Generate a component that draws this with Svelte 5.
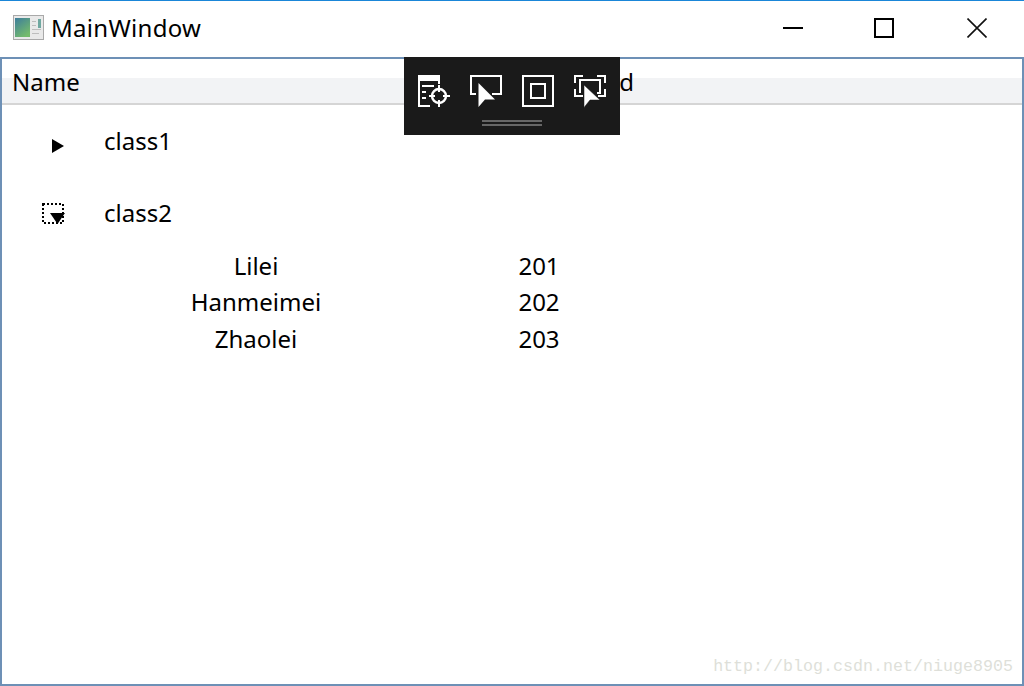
<script>
  const groups = [
    { name: 'class1', open: false, students: [] },
    {
      name: 'class2',
      open: true,
      students: [
        { name: 'Lilei', id: 201 },
        { name: 'Hanmeimei', id: 202 },
        { name: 'Zhaolei', id: 203 }
      ]
    }
  ];
</script>

<div class="window">
  <div class="titlebar">
    <svg class="app-icon" viewBox="0 0 31 25" width="31" height="25">
      <defs>
        <linearGradient id="pane" x1="0" y1="0" x2="0.6" y2="1">
          <stop offset="0" stop-color="#3d7d9c" />
          <stop offset="1" stop-color="#74bb6c" />
        </linearGradient>
      </defs>
      <rect x="0.5" y="0.5" width="30" height="24" fill="#e9e9e9" stroke="#a9a9a9" />
      <rect x="2" y="3" width="15" height="19" fill="url(#pane)" />
      <rect x="25" y="4" width="3" height="9" fill="#6fa8a0" />
      <path d="M19 6.500h4M19 10.500h4M19 14.500h9M19 18.500h7" stroke="#bdbdbd" fill="none" />
    </svg>
    <span class="title">MainWindow</span>
    <div class="controls">
      <svg class="ctl-min" viewBox="0 0 20 20" width="20" height="20"><path d="M0 10h20" stroke="#000" stroke-width="2" /></svg>
      <svg class="ctl-max" viewBox="0 0 20 20" width="20" height="20"><rect x="1" y="1" width="18" height="18" fill="none" stroke="#000" stroke-width="2" /></svg>
      <svg class="ctl-close" viewBox="0 0 20 20" width="20" height="20"><path d="M0.500 0.500l19 19M19.500 0.500l-19 19" stroke="#111" stroke-width="1.6" /></svg>
    </div>
  </div>

  <div class="client">
    <div class="header">
      <span class="col-name">Name</span>
      <span class="col-id">Id</span>
    </div>

    <div class="list">
      {#each groups as group}
        <div class="group" class:open={group.open}>
          <div class="expander">
            <svg class="toggle" viewBox="0 0 24 24" width="24" height="24">
              {#if group.open}
                <rect x="1" y="3" width="20" height="19" fill="none" stroke="#000" stroke-width="2" stroke-dasharray="2 2" />
                <path d="M8 12h15l-7.500 11z" fill="#000" />
              {:else}
                <path d="M10 10l12 7-12 7z" fill="#000" />
              {/if}
            </svg>
            <span class="group-name">{group.name}</span>
          </div>
          {#each group.students as s}
            <div class="row">
              <span class="cell-name">{s.name}</span>
              <span class="cell-id">{s.id}</span>
            </div>
          {/each}
        </div>
      {/each}
    </div>

    <div class="toolbar">
      <div class="tools">
        <svg viewBox="0 0 34 34" width="34" height="34" fill="none" stroke="#fff" stroke-width="2">
          <path d="M1 1h22v6H1z" fill="#fff" stroke="none" />
          <path d="M2 6v26h11M22 6v4" />
          <path d="M5 12h12M5 18h4M5 24h4" />
          <circle cx="22" cy="22" r="7" stroke-width="2.400" />
          <path d="M22 11v7M22 26v7M12 22h6M26 22h7" />
        </svg>
        <svg viewBox="0 0 34 34" width="34" height="34" fill="none">
          <path d="M7 20H2V2h30v18H23" stroke="#fff" stroke-width="2" />
          <path d="M9.500 9v24l6.500-7.500h10z" fill="#fff" />
        </svg>
        <svg viewBox="0 0 34 34" width="34" height="34" fill="none" stroke="#fff" stroke-width="2">
          <rect x="2" y="2" width="30" height="30" />
          <rect x="10" y="10" width="14" height="14" />
        </svg>
        <svg viewBox="0 0 34 34" width="34" height="34" fill="none" stroke="#fff" stroke-width="2">
          <path d="M2 9V2h8M24 2h8v7M2 15v7h8M32 15v7h-7" />
          <path d="M7 19V6h20v13h-3" />
          <path d="M11 11v22.500l6-7.500h10z" fill="#fff" stroke="#1a1a1a" stroke-width="0.500" />
        </svg>
      </div>
      <div class="grip"></div>
    </div>

    <span class="watermark">http://blog.csdn.net/niuge8905</span>
  </div>
</div>

<style>
  :global(body) {
    background: #fff;
  }
  .window {
    width: 1024px;
    height: 686px;
    box-sizing: border-box;
    border-top: 1px solid #1a86d8;
    display: flex;
    flex-direction: column;
    font-family: "Noto Sans", "Open Sans", sans-serif;
    font-size: 24px;
    color: #000;
    background: #fff;
  }
  .titlebar {
    height: 54px;
    padding-bottom: 2px;
    flex: none;
    display: flex;
    align-items: center;
    padding-left: 13px;
  }
  .app-icon {
    margin-top: -1px;
  }
  .title {
    margin-left: 7px;
    margin-top: -2px;
    letter-spacing: 0.3px;
  }
  .controls {
    margin-left: auto;
    display: flex;
    align-items: center;
    padding-right: 37px;
  }
  .ctl-min {
    margin-right: 71px;
  }
  .ctl-max {
    margin-right: 73px;
  }
  .client {
    flex: 1;
    position: relative;
    border: 2px solid #6d90b6;
    display: flex;
    flex-direction: column;
    min-height: 0;
  }
  .header {
    height: 44px;
    flex: none;
    display: flex;
    align-items: center;
    border-bottom: 2px solid #d5d5d5;
    background: linear-gradient(#fff 0, #fff 19px, #f2f3f5 19px, #f2f3f5 100%);
  }
  .col-name {
    width: 609px;
    padding-left: 10px;
    box-sizing: border-box;
  }
  .list {
    padding-top: 17px;
  }
  .group {
    margin-bottom: 36px;
  }
  .group.open {
    margin-bottom: 0;
  }
  .expander {
    display: flex;
    align-items: center;
    height: 36px;
  }
  .toggle {
    flex: none;
    margin: 2px 38px 0 40px;
  }
  .group.open .expander {
    margin-bottom: 17px;
  }
  .row {
    display: flex;
    height: 36.5px;
    align-items: center;
  }
  .cell-name {
    width: 508px;
    text-align: center;
    flex: none;
  }
  .cell-id {
    width: 58px;
    text-align: center;
    flex: none;
  }
  .toolbar {
    position: absolute;
    left: 402px;
    top: -2px;
    width: 216px;
    height: 78px;
    background: #1a1a1a;
    display: flex;
    flex-direction: column;
    align-items: center;
  }
  .tools {
    display: flex;
    gap: 18px;
    margin-top: 17px;
  }
  .grip {
    width: 60px;
    height: 2px;
    margin-top: 12px;
    border-top: 2px solid #666;
    border-bottom: 2px solid #666;
  }
  .watermark {
    position: absolute;
    right: 9px;
    bottom: 8px;
    font-family: "Liberation Mono", monospace;
    font-size: 16.67px;
    color: #dedfd9;
  }
</style>
